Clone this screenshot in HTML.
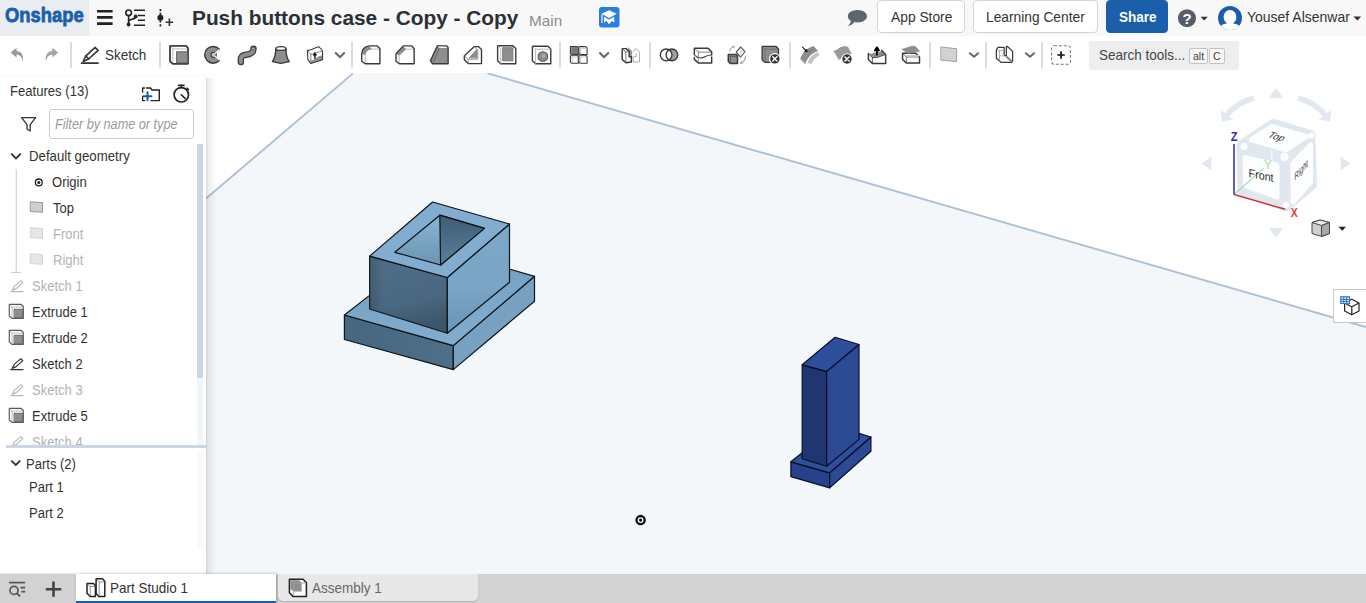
<!DOCTYPE html>
<html><head><meta charset="utf-8"><title>Onshape</title>
<style>
*{box-sizing:border-box;margin:0;padding:0}
html,body{width:1366px;height:603px;overflow:hidden;background:#fff;font-family:"Liberation Sans",sans-serif;color:#333}
.abs{position:absolute}
.t{position:absolute;white-space:nowrap;transform-origin:0 50%;line-height:20px;height:20px}
#hdr{position:absolute;left:0;top:0;width:1366px;height:36px;background:#f8f8f8}
#logo{position:absolute;left:0;top:0;width:89px;height:36px;background:#e9edf1}
.btn{position:absolute;top:0;height:33px;border:1px solid #d4d4d4;border-radius:4px;background:#fff}
#share{background:#1b5faa;border-color:#1b5faa}
#tb{position:absolute;left:0;top:36px;width:1366px;height:37px;background:#fff}
.sep{position:absolute;top:6px;width:2px;height:26px;background:#dcdcdc}
.ic{position:absolute;overflow:visible}
#canvas{position:absolute;left:0;top:73px;width:1366px;height:502px}
#panel{position:absolute;left:0;top:76px;width:206px;height:498px;background:#fff;box-shadow:0 0 2px rgba(0,0,0,.08)}
#pshadow{position:absolute;left:206px;top:78px;width:11px;height:496px;background:linear-gradient(to right,rgba(0,0,0,.11),rgba(0,0,0,.05) 35%,rgba(0,0,0,0))}
.dim{color:#b3b3b3}
#tabs{position:absolute;left:0;top:574px;width:1366px;height:29px;background:#d2d2d2}
</style></head><body>
<div id="canvas">
<svg width="1366" height="502" viewBox="0 73 1366 502" style="position:absolute;left:0;top:0">
<defs>
<linearGradient id="gL" x1="0" y1="0" x2="0.25" y2="1"><stop offset="0" stop-color="#4f6e87"/><stop offset=".7" stop-color="#496780"/><stop offset="1" stop-color="#3e566b"/></linearGradient>
<linearGradient id="gLx" x1="0" y1="0" x2="1" y2="0"><stop offset="0" stop-color="#2c3f50" stop-opacity=".35"/><stop offset=".18" stop-color="#2c3f50" stop-opacity="0"/></linearGradient>
<linearGradient id="gR" x1="0" y1="0" x2="0" y2="1"><stop offset="0" stop-color="#7ca8c9"/><stop offset=".6" stop-color="#79a4c5"/><stop offset="1" stop-color="#6b94b4"/></linearGradient>
<linearGradient id="gHoleL" x1="0" y1="0" x2="0" y2="1"><stop offset="0" stop-color="#8ab5d5"/><stop offset="1" stop-color="#6c94b3"/></linearGradient>
<linearGradient id="gBT" x1="0" y1="0" x2="0.3" y2="1"><stop offset="0" stop-color="#7099b9"/><stop offset=".45" stop-color="#7ba5c6"/><stop offset="1" stop-color="#81accd"/></linearGradient>
<linearGradient id="gHoleR" x1="0" y1="0" x2="0" y2="1"><stop offset="0" stop-color="#3f5d74"/><stop offset="1" stop-color="#5b7f9b"/></linearGradient>
<linearGradient id="gBL" x1="0" y1="0" x2="1" y2="0"><stop offset="0" stop-color="#476680"/><stop offset="1" stop-color="#4f6f89"/></linearGradient>
</defs>
<polygon points="352.8,73 487.5,73 1366,327 1366,575 206,575 206,198.5" fill="#f4f7fa"/>
<line x1="352.8" y1="73.6" x2="206" y2="198.5" stroke="#adc0d7" stroke-width="1.9"/>
<line x1="487.5" y1="73.3" x2="1366" y2="327" stroke="#adc0d7" stroke-width="1.9"/>
<!-- Part 1 -->
<g stroke="#0c1319" stroke-width="1.2" stroke-linejoin="round">
<!-- base -->
<polygon points="344.4,315 453.3,345.6 453.3,369.6 344.4,339.5" fill="url(#gBL)"/>
<polygon points="453.3,345.6 534.5,276.3 534.5,301.3 453.3,369.6" fill="#78a1c1"/>
<polygon points="344.4,315 369.6,295.4 509.3,269 534.5,276.3 453.3,345.6" fill="url(#gBT)"/>
<!-- box -->
<polygon points="369.6,256.1 447.3,277.5 447.3,333.2 369.6,309" fill="url(#gL)"/><polygon points="369.6,256.1 447.3,277.5 447.3,333.2 369.6,309" fill="url(#gLx)" stroke="none"/>
<polygon points="447.3,277.5 509.5,224 509.5,282.3 447.3,333.2" fill="url(#gR)"/>
<polygon points="432.6,202 509.5,224 447.3,277.5 369.6,256.1" fill="#82add0"/>
<!-- hole -->
<polygon points="394.8,252.3 439.8,215.2 484.4,228.4 440.6,265" fill="url(#gHoleL)"/>
<polygon points="439.8,215.2 484.4,228.4 440.6,265" fill="url(#gHoleR)"/>
</g>
<!-- Part 2 -->
<g stroke="#080e26" stroke-width="1.2" stroke-linejoin="round">
<polygon points="790.9,461.8 829.7,472.8 829.7,487.8 790.9,476.7" fill="#25428a"/>
<polygon points="829.7,472.8 870.9,437 870.9,451.3 829.7,487.8" fill="#2c4a94"/>
<polygon points="790.9,461.8 802.2,452.8 859,433.4 870.9,437 829.7,472.8" fill="#2f4f9c"/>
<polygon points="802.2,364.8 826.7,371.3 826.7,466.3 802.2,458.8" fill="#1f3670"/>
<polygon points="826.7,371.3 859,344.5 859,439.4 826.7,466.3" fill="#2d4b95"/>
<polygon points="835.1,337.3 859,344.5 826.7,371.3 802.2,364.8" fill="#2f4f9d"/>
</g>
<!-- origin -->
<circle cx="640.6" cy="520.1" r="4.1" fill="#fff" stroke="#0a0a0a" stroke-width="2.3"/>
<circle cx="640.6" cy="520.1" r="1.6" fill="#0a0a0a"/>
</svg>
</div>

<svg class="ic" style="left:1190px;top:76px" width="176" height="250" viewBox="1190 76 176 250" font-family="Liberation Sans, sans-serif">
<g fill="#e2e8f0">
<path d="M1276 88L1283 98H1269Z"/><path d="M1276 238L1283 228H1269Z"/>
<path d="M1201.5 163.5L1211.5 156.5V170.5Z"/><path d="M1350.5 163.5L1340.500 156.5V170.5Z"/>
</g>
<g fill="none" stroke="#e2e8f0" stroke-width="5.5"><path d="M1254 98C1242 101 1233 107 1226 116"/><path d="M1298 98C1310 101 1319 107 1326 116"/></g>
<g fill="#e2e8f0"><path d="M1220.500 110L1233 119.500L1222 121.500Z"/><path d="M1331.500 110L1319 119.500L1330 121.500Z"/></g>
<!-- cube body -->
<path d="M1273.300 123.800L1310.300 135L1312 185L1286.400 206.300L1242.500 191.600L1241.600 144.800Z" fill="#e0e6ee" stroke="#e0e6ee" stroke-width="10" stroke-linejoin="round" opacity=".95"/>
<g fill="#fdfeff" stroke="#fdfeff" stroke-width="5" stroke-linejoin="round">
<path d="M1251.500 139.500L1271.500 126.500L1306 136.500L1286 150Z"/>
<path d="M1245 157.500L1277 165V197L1245.500 185.500Z"/>
<path d="M1293 163.500L1310.500 145V182L1293 202Z"/>
</g>
<g fill="#fdfeff"><circle cx="1284.500" cy="157" r="4.200"/><circle cx="1244" cy="146.500" r="3.500"/><circle cx="1311" cy="135.500" r="3"/><circle cx="1286" cy="205" r="3"/></g>
<!-- axes -->
<path d="M1234 194.500L1263.500 168.400" stroke="#7fcf7f" stroke-width="1" fill="none"/>
<path d="M1271.800 150V166" stroke="#fff" stroke-width="1.200" fill="none" opacity=".8"/>
<path d="M1234 194.500V144" stroke="#2a2ab8" stroke-width="1.500" fill="none"/>
<path d="M1234 194.500L1285.200 209.300" stroke="#d93030" stroke-width="1.500" fill="none"/>
<text x="1230.800" y="140.500" font-size="12.500" font-weight="bold" fill="#2a2ab8" textLength="6.800" lengthAdjust="spacingAndGlyphs">Z</text>
<text x="1290.800" y="216.800" font-size="12.500" font-weight="bold" fill="#e04040" textLength="7" lengthAdjust="spacingAndGlyphs">X</text>
<text x="1264" y="169" font-size="12" fill="#a6dba6" textLength="8" lengthAdjust="spacingAndGlyphs">Y</text>
<text transform="translate(1248.600,177) matrix(1,0.2,0,1,0,0)" font-size="12" fill="#333" textLength="25" lengthAdjust="spacingAndGlyphs">Front</text>
<text transform="translate(1266.800,137) rotate(17) skewX(-25)" font-size="9.800" fill="#333">Top</text>
<text transform="translate(1294.500,181) matrix(0.55,-0.62,0,1,0,0)" font-size="10.500" fill="#333">Right</text>
<!-- display style -->
<g stroke="#444" stroke-width="1" stroke-linejoin="round">
<path d="M1312 222.500L1320 220L1329.500 222.500V233.500L1321.500 236.500L1312 233.500Z" fill="#cfcfcf"/>
<path d="M1312 222.500L1321.500 225.500L1329.500 222.500L1320 220Z" fill="#ececec"/>
<path d="M1321.500 225.500V236.500L1329.500 233.500V222.500Z" fill="#a9a9a9"/>
</g>
<path d="M1338.500 226.800H1346L1342.300 230.800Z" fill="#222"/>
<!-- right button -->
<rect x="1333.500" y="289.500" width="34" height="33" fill="#fff" stroke="#c8c8c8" stroke-width="1"/>
<g fill="none" stroke="#222" stroke-width="1.200" stroke-linejoin="round"><path d="M1351.800 299.200L1359 303V311L1351.800 314.800L1344.600 311V303Z"/><path d="M1344.600 303L1351.800 306.800L1359 303M1351.800 306.800V314.800"/></g>
<rect x="1340.200" y="296.200" width="9.800" height="7.800" fill="#2a6cc4"/>
<g fill="#cfe3ff"><rect x="1341.300" y="297.300" width="2" height="1.800"/><rect x="1344.200" y="297.300" width="2" height="1.800"/><rect x="1347.100" y="297.300" width="2" height="1.800"/><rect x="1341.300" y="300" width="2" height="1.200"/><rect x="1344.200" y="300" width="2" height="1.200"/><rect x="1347.100" y="300" width="2" height="1.200"/><rect x="1341.300" y="302" width="2" height="1.200"/><rect x="1344.200" y="302" width="2" height="1.200"/><rect x="1347.100" y="302" width="2" height="1.200"/></g>
</svg>

<div id="hdr">
<div id="logo"><span class="t" id="logot" style="left:5.3px;top:5.4px;font-weight:bold;font-size:21px;color:#1b5faa;-webkit-text-stroke:0.8px #1b5faa;transform:scaleX(.875)">Onshape</span></div>
<!-- hamburger -->
<svg class="ic" style="left:97px;top:10px" width="16" height="16" viewBox="0 0 16 16"><path d="M0 1.3h15.6M0 7.4h15.6M0 13.6h15.6" stroke="#222" stroke-width="2.6" fill="none"/></svg>
<!-- versions -->
<svg class="ic" style="left:125px;top:9px" width="21" height="19" viewBox="0 0 21 19"><g fill="none" stroke="#222" stroke-width="1.6"><circle cx="3.6" cy="3.8" r="2.8"/><path d="M3.6 6.6V14.6"/><path d="M3.6 12.5C3.6 9.5 10 11 10.5 8"/><path d="M9 1.3H20M13 6.5H20M13 11.3H20M9 16.3H20" stroke-width="1.5"/></g><circle cx="3.6" cy="15.5" r="1.9" fill="#222"/><circle cx="10.7" cy="7.4" r="1.9" fill="#222"/></svg>
<!-- insert -->
<svg class="ic" style="left:157px;top:9px" width="18" height="19" viewBox="0 0 18 19"><path d="M3.4 0V18" stroke="#222" stroke-width="1.7" stroke-dasharray="2.2 1.6" fill="none"/><circle cx="3.4" cy="8.8" r="3" fill="#222"/><path d="M8.6 13.2H16.2M12.4 9.4V17" stroke="#333" stroke-width="1.6" fill="none"/></svg>
<div class="t" id="title" style="left:192px;top:8.3px;font-weight:bold;font-size:21px;color:#2b2f36;transform:scaleX(.992)">Push buttons case - Copy - Copy</div>
<div class="t" id="main" style="left:528.5px;top:11px;font-size:15px;color:#8c8c8c;transform:scaleX(1.02)">Main</div>
<!-- edu icon -->
<svg class="ic" style="left:599px;top:6.5px" width="21" height="21" viewBox="0 0 21 21"><rect x="0" y="0" width="20.5" height="20.5" rx="3" fill="#2a7de1"/><path d="M10.100 3.200L17.800 6.800L10.100 10.900L2.500 6.800Z" fill="#fff"/><path d="M5 9.700V15.500L7.600 14L10.100 17.600L12.700 14L15.300 15.500V9.700L10.100 12.500Z" fill="#fff"/><path d="M3 7.300V16" stroke="#fff" stroke-width="1.100"/></svg>
<!-- chat -->
<svg class="ic" style="left:847px;top:10px" width="21" height="17" viewBox="0 0 21 17"><path d="M10.5 0C16 0 20 2.8 20 6.2C20 9.6 16 12.4 10.5 12.4C9.3 12.4 8.2 12.3 7.2 12C5.8 14.2 3.5 15.6 1 16C2.6 14.6 3.6 12.8 3.8 10.8C1.8 9.7 0.8 8 0.8 6.2C0.8 2.8 5 0 10.5 0Z" fill="#5b6670"/></svg>
<div class="btn" style="left:877px;width:88px"><span class="t" style="left:13px;top:5.6px;font-size:15px;color:#333;transform:scaleX(.92)">App Store</span></div>
<div class="btn" style="left:973px;width:125px"><span class="t" style="left:12.2px;top:5.6px;font-size:15px;color:#333;transform:scaleX(.918)">Learning Center</span></div>
<div class="btn" id="share" style="left:1106px;width:62px"><span class="t" style="left:11.5px;top:5.8px;font-size:15px;font-weight:bold;color:#fff;transform:scaleX(.9)">Share</span></div>
<!-- help -->
<svg class="ic" style="left:1178px;top:9px" width="32" height="19" viewBox="0 0 32 19"><circle cx="9" cy="9.2" r="9" fill="#555d66"/><text x="9" y="14.6" font-family="Liberation Sans, sans-serif" font-weight="bold" font-size="15" fill="#fff" text-anchor="middle">?</text><path d="M22.6 7.8H29.8L26.2 11.6Z" fill="#333"/></svg>
<!-- avatar -->
<svg class="ic" style="left:1218px;top:6px" width="24" height="24" viewBox="0 0 24 24"><defs><clipPath id="av"><circle cx="12" cy="12" r="12"/></clipPath></defs><circle cx="12" cy="12" r="12" fill="#1b5faa"/><g clip-path="url(#av)" fill="#fff"><ellipse cx="12" cy="11" rx="6.4" ry="7"/><path d="M0.5 26C0.5 19.5 6 17 12 17C18 17 23.5 19.5 23.5 26Z"/></g></svg>
<div class="t" id="user" style="left:1246.5px;top:6.5px;font-size:15px;color:#333;transform:scaleX(.932)">Yousef Alsenwar</div>
<svg class="ic" style="left:1353px;top:16px" width="9" height="5" viewBox="0 0 9 5"><path d="M0.4 0.4H8.2L4.3 4.4Z" fill="#333"/></svg>
</div>

<div id="tb">
<svg width="1366" height="37" viewBox="0 36 1366 37" style="position:absolute;left:0;top:0">
<g transform="translate(0,36) scale(0.12446)" fill="none" stroke-linejoin="round" stroke-linecap="round"><path d="M85 132L133 95V120C170 122 192 150 184 205C178 172 160 150 133 148V172Z" fill="#9a9a9a" stroke="none"/><path d="M468 132L420 95V120C383 122 361 150 369 205C375 172 393 150 420 148V172Z" fill="#a4a4a4" stroke="none"/></g>
<g transform="translate(0,36) scale(0.12446)" fill="none" stroke-linejoin="round" stroke-linecap="round"><g stroke="#333" stroke-width="13"><path d="M655 218H788"/><path d="M668 205L690 160L765 92L788 115L712 185Z"/><path d="M690 160L712 185"/></g></g>
<g transform="translate(164,40) scale(0.07321)" fill="none" stroke="#3a3a3a" stroke-width="19" stroke-linejoin="round" stroke-linecap="round"><path d="M82 80H300L328 108V325H118L82 290Z" fill="#fff"/><path d="M88 86L122 122V318M122 122H322" stroke="#b0b0b0" stroke-width="12"/><path d="M82 80H300L328 108V325H118L82 290Z"/><rect x="172" y="160" width="148" height="150" fill="#8e8e8e" stroke="#666" stroke-width="14"/></g>
<g transform="translate(164,40) scale(0.07321)" fill="none" stroke="#3a3a3a" stroke-width="19" stroke-linejoin="round" stroke-linecap="round"><path d="M755 127A114 114 0 1 0 755 279L695 221A30 30 0 0 1 695 185Z" fill="#8e8e8e"/><circle cx="678" cy="203" r="36" fill="#c8c8c8" stroke-width="15"/><path d="M700 181L749 135M700 225L749 271" stroke="#fff" stroke-width="16"/></g>
<g transform="translate(164,40) scale(0.07321)" fill="none" stroke="#3a3a3a" stroke-width="19" stroke-linejoin="round" stroke-linecap="round"><path d="M1050 300C1040 180 1110 215 1170 190C1225 170 1220 150 1222 118" stroke="#3a3a3a" stroke-width="88"/><path d="M1050 300C1040 180 1110 215 1170 190C1225 170 1220 150 1222 118" stroke="#8e8e8e" stroke-width="54"/><ellipse cx="1222" cy="112" rx="30" ry="13" fill="#f4f4f4" stroke="#3a3a3a" stroke-width="12"/></g>
<g transform="translate(264,40) scale(0.07321)" fill="none" stroke="#3a3a3a" stroke-width="19" stroke-linejoin="round" stroke-linecap="round"><path d="M162 118C160 200 140 260 115 295L230 320L345 295C320 260 300 200 300 118Z" fill="#8e8e8e"/><ellipse cx="231" cy="116" rx="69" ry="26" fill="#f6f6f6"/></g>
<g transform="translate(264,40) scale(0.07321)" fill="none" stroke="#3a3a3a" stroke-width="19" stroke-linejoin="round" stroke-linecap="round"><path d="M640 280C690 285 720 215 800 212V270L640 320Z" fill="#8e8e8e" stroke="none"/><path d="M592 142C650 140 700 100 752 92L800 150V270L640 320L600 272Z" stroke-width="15"/><path d="M592 142L640 195V320M640 195C700 190 740 160 800 150" stroke-width="11" stroke="#666"/><path d="M695 255V190" stroke="#111" stroke-width="20" stroke-linecap="butt"/><path d="M674 206L695 168L716 206Z" stroke="#111" stroke-width="8" fill="#111"/></g>
<g transform="translate(264,40) scale(0.07321)" fill="none" stroke="#3a3a3a" stroke-width="19" stroke-linejoin="round" stroke-linecap="round"><path d="M972 172L1037.5 233L1103 172" stroke="#666" stroke-width="27" stroke-linejoin="miter" stroke-linecap="butt"/></g>
<g transform="translate(355,40) scale(0.07321)" fill="none" stroke="#3a3a3a" stroke-width="19" stroke-linejoin="round" stroke-linecap="round"><path d="M95 185A100 100 0 0 1 195 85L235 125A100 100 0 0 0 140 212Z" fill="#8e8e8e" stroke="none"/><path d="M235 125H335M140 212V320" stroke="#b0b0b0" stroke-width="12"/><path d="M92 290V185A105 105 0 0 1 195 80H300L340 116V325H140Z"/></g>
<g transform="translate(355,40) scale(0.07321)" fill="none" stroke="#3a3a3a" stroke-width="19" stroke-linejoin="round" stroke-linecap="round"><path d="M565 188L660 85L700 125L602 215Z" fill="#8e8e8e" stroke="none"/><path d="M700 125H805M602 215V320" stroke="#b0b0b0" stroke-width="12"/><path d="M560 290V188L660 80H770L808 116V325H605Z"/></g>
<g transform="translate(355,40) scale(0.07321)" fill="none" stroke="#3a3a3a" stroke-width="19" stroke-linejoin="round" stroke-linecap="round"><path d="M1030 285L1125 80H1250L1272 102V325H1060Z" fill="#8e8e8e"/><path d="M1132 88H1246L1262 108H1152Z" fill="#f4f4f4" stroke="none"/><path d="M1150 112L1072 300" stroke="#555" stroke-width="10"/></g>
<g transform="translate(455,40) scale(0.07321)" fill="none" stroke="#3a3a3a" stroke-width="19" stroke-linejoin="round" stroke-linecap="round"><path d="M128 215L265 90H320L362 130V322H180L128 270Z" fill="#fff"/><path d="M200 240L296 132V240Z" fill="#8e8e8e" stroke="#666" stroke-width="10"/><path d="M128 215L180 262H312V135L268 92M180 262V320" stroke="#777" stroke-width="11"/></g>
<g transform="translate(455,40) scale(0.07321)" fill="none" stroke="#3a3a3a" stroke-width="19" stroke-linejoin="round" stroke-linecap="round"><path d="M582 78H790L830 116V325H625L582 285Z" fill="#fff"/><rect x="655" y="105" width="136" height="180" fill="#8e8e8e" stroke="#777" stroke-width="12"/><path d="M588 84L625 118V320" stroke="#b0b0b0" stroke-width="12"/></g>
<g transform="translate(455,40) scale(0.07321)" fill="none" stroke="#3a3a3a" stroke-width="19" stroke-linejoin="round" stroke-linecap="round"><path d="M1057 86H1270L1308 122V325H1100L1057 285Z" fill="#fff"/><path d="M1062 92L1100 126H1304M1100 126V320" stroke="#b0b0b0" stroke-width="12"/><circle cx="1200" cy="225" r="66" fill="#8e8e8e" stroke="#555" stroke-width="14"/><circle cx="1212" cy="215" r="36" fill="#a8a8a8" stroke="#777" stroke-width="8"/></g>
<g transform="translate(560,40) scale(0.07321)" fill="none" stroke="#3a3a3a" stroke-width="19" stroke-linejoin="round" stroke-linecap="round"><path d="M142 90H232L250 108V198H160L142 180Z" fill="#8e8e8e" stroke-width="15"/><path d="M148 96L166 114H246M166 114V194" stroke="#b0b0b0" stroke-width="9"/><path d="M258 90H352L370 108V198H276L258 180Z" fill="#fff" stroke-width="15"/><path d="M264 96L282 114H366M282 114V194" stroke="#b0b0b0" stroke-width="9"/><path d="M142 208H232L250 226V318H160L142 300Z" fill="#fff" stroke-width="15"/><path d="M148 214L166 232H246M166 232V314" stroke="#b0b0b0" stroke-width="9"/><path d="M258 208H352L370 226V318H276L258 300Z" fill="#fff" stroke-width="15"/><path d="M264 214L282 232H366M282 232V314" stroke="#b0b0b0" stroke-width="9"/><rect x="160" y="108" width="84" height="84" fill="#7a7a7a" stroke="none"/></g>
<g transform="translate(560,40) scale(0.07321)" fill="none" stroke="#3a3a3a" stroke-width="19" stroke-linejoin="round" stroke-linecap="round"><path d="M537 170L602.0 233L667 170" stroke="#666" stroke-width="27" stroke-linejoin="miter" stroke-linecap="butt"/></g>
<g transform="translate(560,40) scale(0.07321)" fill="none" stroke="#3a3a3a" stroke-width="19" stroke-linejoin="round" stroke-linecap="round"><path d="M925 95L985 150V240L940 215Z" fill="#9a9a9a" stroke="none"/><path d="M1000 150L1040 118L1085 160V300H1000V230H1040V190" stroke="#a8a8a8" stroke-width="13"/><path d="M850 118H905L945 160V230H975V300L900 310L850 265Z" fill="#fff" stroke-width="20"/><path d="M856 124L900 165V300M900 165L940 160" stroke="#666" stroke-width="11"/></g>
<g transform="translate(652,40) scale(0.07321)" fill="none" stroke="#3a3a3a" stroke-width="19" stroke-linejoin="round" stroke-linecap="round"><circle cx="272" cy="203" r="80" fill="#a0a0a0" stroke="none"/><circle cx="193" cy="203" r="80" fill="#fff" stroke="none"/><circle cx="272" cy="203" r="80"/><circle cx="193" cy="203" r="80"/></g>
<g transform="translate(652,40) scale(0.07321)" fill="none" stroke="#3a3a3a" stroke-width="19" stroke-linejoin="round" stroke-linecap="round"><path d="M578 200V112H765L815 162V200M815 232V315H632L578 265V240" fill="none" stroke-width="20"/><path d="M584 118L632 165H810M632 165V225M632 260V312" stroke="#666" stroke-width="11"/><path d="M590 212C640 262 690 250 730 225C760 205 780 205 815 205" stroke-width="15"/></g>
<g transform="translate(652,40) scale(0.07321)" fill="none" stroke="#3a3a3a" stroke-width="19" stroke-linejoin="round" stroke-linecap="round"><path d="M1062 150C1068 122 1085 100 1112 92" stroke="#aaa" stroke-width="17"/><path d="M1095 78L1140 84L1112 116Z" fill="#aaa" stroke="none"/><path d="M1278 225C1275 262 1258 290 1232 308" stroke="#aaa" stroke-width="17"/><path d="M1215 288L1198 328L1248 326Z" fill="#aaa" stroke="none"/><path d="M1210 95L1270 160L1210 235L1150 165Z" fill="#fff" stroke="#444" stroke-width="14"/><path d="M1210 95L1215 160L1270 160M1215 160L1210 235" stroke="#aaa" stroke-width="7"/><path d="M1042 198H1150L1168 215V320H1068L1042 295Z" fill="#8e8e8e" stroke-width="20"/><path d="M1048 204L1072 226H1164M1072 226V316" stroke="#555" stroke-width="10"/></g>
<g transform="translate(752,40) scale(0.07321)" fill="none" stroke="#3a3a3a" stroke-width="19" stroke-linejoin="round" stroke-linecap="round"><path d="M138 88H330L362 122V305H175L138 270Z" fill="#8e8e8e" stroke-width="18"/><path d="M145 95L178 126V300M178 126H356" stroke="#666" stroke-width="11"/><circle cx="312" cy="258" r="80" fill="#fff" stroke="none"/><circle cx="312" cy="258" r="64" fill="#333" stroke="none"/><path d="M284 230L340 286M340 230L284 286" stroke="#fff" stroke-width="20"/></g>
<g transform="translate(752,40) scale(0.07321)" fill="none" stroke="#3a3a3a" stroke-width="19" stroke-linejoin="round" stroke-linecap="round"><path d="M760 310C775 250 830 195 900 165L925 210C870 235 830 280 810 330Z" fill="#c4c4c4" stroke="none"/><path d="M665 255C690 170 760 110 840 88L895 150C830 165 760 225 725 318Z" fill="#8e8e8e" stroke="#777" stroke-width="8"/><path d="M775 150L782 168C790 150 800 135 812 125" stroke="#666" stroke-width="8"/><path d="M690 98L742 150M722 156L752 160L748 130Z" stroke="#222" stroke-width="16" fill="#222"/></g>
<g transform="translate(828,40) scale(0.07321)" fill="none" stroke="#3a3a3a" stroke-width="19" stroke-linejoin="round" stroke-linecap="round"><path d="M82 150C130 150 150 95 215 90C240 88 260 92 270 96L320 190C260 200 200 230 150 265Z" fill="#999" stroke="#8a8a8a" stroke-width="6"/><circle cx="260" cy="260" r="80" fill="#fff" stroke="none"/><circle cx="260" cy="260" r="64" fill="#333" stroke="none"/><path d="M232 232L288 288M288 232L232 288" stroke="#fff" stroke-width="20"/></g>
<g transform="translate(828,40) scale(0.07321)" fill="none" stroke="#3a3a3a" stroke-width="19" stroke-linejoin="round" stroke-linecap="round"><path d="M552 185C600 200 640 160 700 165L735 142L788 200C730 205 700 250 610 245Z" fill="#8e8e8e" stroke="none"/><path d="M552 185V265L606 320H788V200L735 142" stroke-width="20"/><path d="M552 185L606 242V318M606 242C700 250 730 205 788 200" stroke="#444" stroke-width="12"/><path d="M668 200V130M640 142L668 100L696 142Z" stroke="#000" stroke-width="24" fill="#000"/></g>
<g transform="translate(828,40) scale(0.07321)" fill="none" stroke="#3a3a3a" stroke-width="19" stroke-linejoin="round" stroke-linecap="round"><path d="M1018 182H1200L1250 232V315H1070L1018 265Z" fill="#fff" stroke-width="20"/><path d="M1024 188L1070 232H1246M1070 232V312" stroke="#555" stroke-width="11"/><path d="M1076 215H1240" stroke="#ccc" stroke-width="22"/><path d="M1015 125C1070 120 1100 88 1160 85C1180 84 1195 90 1200 95L1250 155C1200 160 1150 170 1100 188Z" fill="#8e8e8e" stroke="#777" stroke-width="8"/></g>
<g transform="translate(935,40) scale(0.07321)" fill="none" stroke="#3a3a3a" stroke-width="19" stroke-linejoin="round" stroke-linecap="round"><path d="M85 95L295 120V295L85 275Z" fill="#d2d2d2" stroke="#9a9a9a" stroke-width="13"/></g>
<g transform="translate(935,40) scale(0.07321)" fill="none" stroke="#3a3a3a" stroke-width="19" stroke-linejoin="round" stroke-linecap="round"><path d="M468 175L533.0 229L598 175" stroke="#666" stroke-width="27" stroke-linejoin="miter" stroke-linecap="butt"/></g>
<g transform="translate(935,40) scale(0.07321)" fill="none" stroke="#3a3a3a" stroke-width="19" stroke-linejoin="round" stroke-linecap="round"><path d="M860 100H945V215H975V88H990L1060 155V290L1045 305H900L838 250V130Z" fill="#fff" stroke-width="17"/><path d="M972 222L1046 292" stroke="#8e8e8e" stroke-width="30" stroke-linecap="butt"/><path d="M888 215H945" stroke="#ccc" stroke-width="18" stroke-linecap="butt"/><path d="M846 122L880 145V292M880 145L940 140" stroke="#888" stroke-width="10"/></g>
<g transform="translate(935,40) scale(0.07321)" fill="none" stroke="#3a3a3a" stroke-width="19" stroke-linejoin="round" stroke-linecap="round"><path d="M1232 175L1297.0 229L1362 175" stroke="#666" stroke-width="27" stroke-linejoin="miter" stroke-linecap="butt"/></g>
<g transform="translate(860,36) scale(0.16838)" fill="none" stroke-linejoin="round" stroke-linecap="round"><rect x="1138" y="58" width="112" height="110" rx="14" stroke="#777" stroke-width="6" stroke-dasharray="18 11" fill="none" stroke-linecap="butt"/><path d="M1172 113H1216M1194 91V135" stroke="#111" stroke-width="10" stroke-linecap="butt"/></g>
</svg>
<div class="sep" style="left:70.1px"></div><div class="sep" style="left:159.1px"></div><div class="sep" style="left:351.0px"></div><div class="sep" style="left:559.0px"></div><div class="sep" style="left:649.0px"></div><div class="sep" style="left:789.1px"></div><div class="sep" style="left:929.1px"></div><div class="sep" style="left:984.6px"></div><div class="sep" style="left:1041.0px"></div>
<div class="t" id="sketch" style="left:104.5px;top:8.5px;font-size:15px;color:#333;transform:scaleX(.9)">Sketch</div>
<div class="abs" style="left:1089px;top:4.5px;width:150px;height:29px;background:#eee;border-radius:3px"></div>
<div class="t" id="search" style="left:1098.5px;top:8.5px;font-size:15px;color:#444;transform:scaleX(.9)">Search tools...</div>
<div class="abs" style="left:1189px;top:11.5px;width:19px;height:16.5px;border:1px solid #c4c4c4;border-bottom-width:1.5px;border-radius:2px;background:#f6f6f6"><span class="t" style="left:3px;top:-3px;font-size:10.5px;color:#444">alt</span></div>
<div class="abs" style="left:1208.5px;top:11.5px;width:16px;height:16.5px;border:1px solid #c4c4c4;border-bottom-width:1.5px;border-radius:2px;background:#f6f6f6"><span class="t" style="left:3.5px;top:-3px;font-size:10.5px;color:#444">C</span></div>
</div>

<div id="pshadow"></div>
<div id="panel">
<div class="t " style="left:10.4px;top:5.3500000000000085px;font-size:14px;color:#333;transform:scaleX(0.935);">Features (13)</div>
<div class="abs" style="left:49px;top:33px;width:145px;height:30px;border:1px solid #ccc;border-radius:3px;background:#fff"></div>
<div class="t " style="left:55px;top:38.45px;font-size:14px;color:#9a9a9a;transform:scaleX(0.905);font-style:italic;">Filter by name or type</div>
<div class="abs" style="left:196.5px;top:67.5px;width:6.5px;height:406px;background:#f1f4f8"></div>
<div class="abs" style="left:196.5px;top:67.5px;width:6.5px;height:234px;background:#cbd6e2"></div>
<div class="t " style="left:29.1px;top:70.15px;font-size:14px;transform:scaleX(0.945);">Default geometry</div>
<div class="t " style="left:52.4px;top:96.15px;font-size:14px;transform:scaleX(0.93);">Origin</div>
<div class="t " style="left:52.8px;top:122.15px;font-size:14px;transform:scaleX(0.93);">Top</div>
<div class="t dim" style="left:52.8px;top:148.15px;font-size:14px;transform:scaleX(0.93);">Front</div>
<div class="t dim" style="left:52.8px;top:174.15px;font-size:14px;transform:scaleX(0.93);">Right</div>
<div class="t dim" style="left:32.4px;top:200.14999999999998px;font-size:14px;transform:scaleX(0.93);">Sketch 1</div>
<div class="t " style="left:32.4px;top:226.14999999999998px;font-size:14px;transform:scaleX(0.93);">Extrude 1</div>
<div class="t " style="left:32.4px;top:252.14999999999998px;font-size:14px;transform:scaleX(0.93);">Extrude 2</div>
<div class="t " style="left:32.4px;top:278.15px;font-size:14px;transform:scaleX(0.93);">Sketch 2</div>
<div class="t dim" style="left:32.4px;top:304.15px;font-size:14px;transform:scaleX(0.93);">Sketch 3</div>
<div class="t " style="left:32.4px;top:330.15px;font-size:14px;transform:scaleX(0.93);">Extrude 5</div>
<div class="t dim" style="left:32.4px;top:356.15px;font-size:14px;transform:scaleX(0.93);">Sketch 4</div>
<svg width="206" height="498" viewBox="0 76 206 498" style="position:absolute;left:0;top:0" fill="none" stroke-linecap="round" stroke-linejoin="round">
<path d="M146.5 88H150.5L152 90H159.3V100.6H151" stroke="#222" stroke-width="1.4"/><path d="M142.6 92V88H144.5M142.6 96.5V100.6H144.5" stroke="#222" stroke-width="1.3"/><path d="M143.5 96.2H151.5M147.5 92.2V100.2" stroke="#1b5faa" stroke-width="2"/>
<circle cx="181.3" cy="94.8" r="7.2" stroke="#222" stroke-width="1.7"/><path d="M178.6 85.4H184M181.3 85.6V87.4M181.3 94.8L185 98.4M187 88.2L188.4 89.6" stroke="#222" stroke-width="1.6"/>
<path d="M21.6 117.7H35.6L30.2 124.6V131L27 129V124.6Z" stroke="#333" stroke-width="1.3"/>
<path d="M11.2 153.6L16 158.4L20.8 153.6" stroke="#333" stroke-width="1.9" stroke-linecap="butt" stroke-linejoin="miter"/>
<path d="M16.2 169V272.4M11 272.4H21" stroke="#c8c8c8" stroke-width="1" stroke-linecap="butt"/>
<circle cx="38.8" cy="182.4" r="3.4" stroke="#222" stroke-width="1.3"/><circle cx="38.8" cy="182.4" r="1.5" fill="#222"/>
<path d="M30.7 201.8L42.5 202.6V212.3L30.7 211.5Z" fill="#cfcfcf" stroke="#999" stroke-width="1"/>
<path d="M30.7 227.8L42.5 228.6V238.3L30.7 237.5Z" fill="#e6e6e6" stroke="#d4d4d4" stroke-width="1"/>
<path d="M30.7 253.8L42.5 254.6V264.3L30.7 263.5Z" fill="#e6e6e6" stroke="#d4d4d4" stroke-width="1"/>
<g stroke="#b8b8b8" stroke-width="1.2"><path d="M10.8 291.6H23"/><path d="M12.2 290.4L14.2 286.4L20.8 280.6L22.8 282.6L16.2 288.6Z"/></g>
<g stroke="#333" stroke-width="1.2"><path d="M10.8 369.6H23"/><path d="M12.2 368.4L14.2 364.4L20.8 358.6L22.8 360.6L16.2 366.6Z"/></g>
<g stroke="#b8b8b8" stroke-width="1.2"><path d="M10.8 395.6H23"/><path d="M12.2 394.4L14.2 390.4L20.8 384.6L22.8 386.6L16.2 392.6Z"/></g>
<g stroke="#b8b8b8" stroke-width="1.2"><path d="M10.8 447.6H23"/><path d="M12.2 446.4L14.2 442.4L20.8 436.6L22.8 438.6L16.2 444.6Z"/></g>
<path d="M9.3 304.3H20.9L23.3 306.5V318.3H11.9L9.3 315.90000000000003Z" fill="#fff" stroke="#5a5a5a" stroke-width="1.2"/><path d="M9.8 304.8L12.100000000000001 307.1V317.7M12.100000000000001 307.1H22.700000000000003" stroke="#aaa" stroke-width=".8"/><rect x="14.5" y="309.3" width="8.2" height="8.4" fill="#8e8e8e" stroke="#666" stroke-width="1"/>
<path d="M9.3 330.3H20.9L23.3 332.5V344.3H11.9L9.3 341.90000000000003Z" fill="#fff" stroke="#5a5a5a" stroke-width="1.2"/><path d="M9.8 330.8L12.100000000000001 333.1V343.7M12.100000000000001 333.1H22.700000000000003" stroke="#aaa" stroke-width=".8"/><rect x="14.5" y="335.3" width="8.2" height="8.4" fill="#8e8e8e" stroke="#666" stroke-width="1"/>
<path d="M9.3 408.3H20.9L23.3 410.5V422.3H11.9L9.3 419.90000000000003Z" fill="#fff" stroke="#5a5a5a" stroke-width="1.2"/><path d="M9.8 408.8L12.100000000000001 411.1V421.7M12.100000000000001 411.1H22.700000000000003" stroke="#aaa" stroke-width=".8"/><rect x="14.5" y="413.3" width="8.2" height="8.4" fill="#8e8e8e" stroke="#666" stroke-width="1"/>
</svg>
<div class="abs" style="left:0;top:368.5px;width:206px;height:130px;background:#fff"></div>
<div class="abs" style="left:6px;top:368.8px;width:200px;height:3.6px;background:#cbd6e2"></div>
<div class="abs" style="left:196.5px;top:375px;width:6.5px;height:98px;background:#f8f9fb"></div>
<svg class="ic" style="left:10px;top:383px" width="12" height="8" viewBox="0 0 12 8"><path d="M1.3 1.6L5.8 6L10.3 1.6" stroke="#333" stroke-width="1.8" fill="none"/></svg>
<div class="t " style="left:26.4px;top:378.15px;font-size:14px;transform:scaleX(0.93);">Parts (2)</div>
<div class="t " style="left:29.3px;top:401.15px;font-size:14px;transform:scaleX(0.93);">Part 1</div>
<div class="t " style="left:29.3px;top:427.15px;font-size:14px;transform:scaleX(0.93);">Part 2</div>
</div>

<div id="tabs">
<div class="abs" id="tabtop" style="left:0;top:-1px;width:76px;height:1px;background:#e9e9e9"></div>
<svg class="ic" style="left:0;top:0" width="76" height="29" viewBox="0 574 76 29" fill="none">
<path d="M9 582.6H25.2" stroke="#555" stroke-width="1.7"/>
<circle cx="14" cy="590.4" r="4" stroke="#555" stroke-width="1.7"/><path d="M16.9 593.3L20 596.4" stroke="#555" stroke-width="1.9"/>
<path d="M20.5 587.6H25.2M21.5 591.6H25.2" stroke="#555" stroke-width="1.7"/>
<path d="M45.8 589.2H61.3M53.5 581.6V596.8" stroke="#444" stroke-width="2.6"/>
</svg>
<div class="abs" style="left:76px;top:0;width:199.5px;height:29px;background:#fff;box-shadow:1px 0 3px rgba(0,0,0,.3)"></div>
<div class="abs" style="left:76px;top:27.3px;width:199.5px;height:2px;background:#1b5faa"></div>
<svg class="ic" style="left:86px;top:4px" width="21" height="21" viewBox="86 578 21 21" fill="#fff" stroke="#222" stroke-width="1.5" stroke-linejoin="round">
<path d="M96.100 578.800H102.400L104.800 581.200V596.600H99.200L96.100 593.700Z"/><path d="M96.800 579.600L99.200 581.900V596M99.200 581.900H104.400" stroke-width=".8" stroke="#777" fill="none"/>
<path d="M87 583.400H93.500L95.400 585.500V596.600H90.300L87 593.200Z"/><path d="M87.700 584.200L90.200 586.500V596M90.200 586.500H95" stroke-width=".8" stroke="#777" fill="none"/>
</svg>
<div class="t" id="ps" style="left:109.8px;top:4.3px;font-size:15px;color:#333;transform:scaleX(.9)">Part Studio 1</div>
<div class="abs" style="left:277.5px;top:0;width:200.5px;height:27px;background:#e8e8e8;border-radius:0 0 5px 5px;box-shadow:0 1px 1px rgba(0,0,0,.15)"></div>
<svg class="ic" style="left:288px;top:4px" width="20" height="20" viewBox="288 578 20 20" fill="none" stroke="#222" stroke-width="1.500" stroke-linejoin="round">
<path d="M289.400 579.300H303.100L306.400 582.700V596.400H293L289.400 592.800Z" fill="#fff"/>
<path d="M290.300 580.300H299.200L301.600 583.100V591.500H293.700L290.300 588.900Z" fill="#8e8e8e" stroke="none"/>
<path d="M290.300 580.300L293.700 583.100H301.600M293.700 583.100V591.500" stroke="#a5a5a5" stroke-width=".8"/>
<path d="M293.700 591.500V596M301.600 583.100L306 582.900" stroke="#999" stroke-width=".8"/>
</svg>
<div class="t" id="asm" style="left:312.3px;top:4.3px;font-size:15px;color:#666;transform:scaleX(.9)">Assembly 1</div>
</div>

</body></html>
